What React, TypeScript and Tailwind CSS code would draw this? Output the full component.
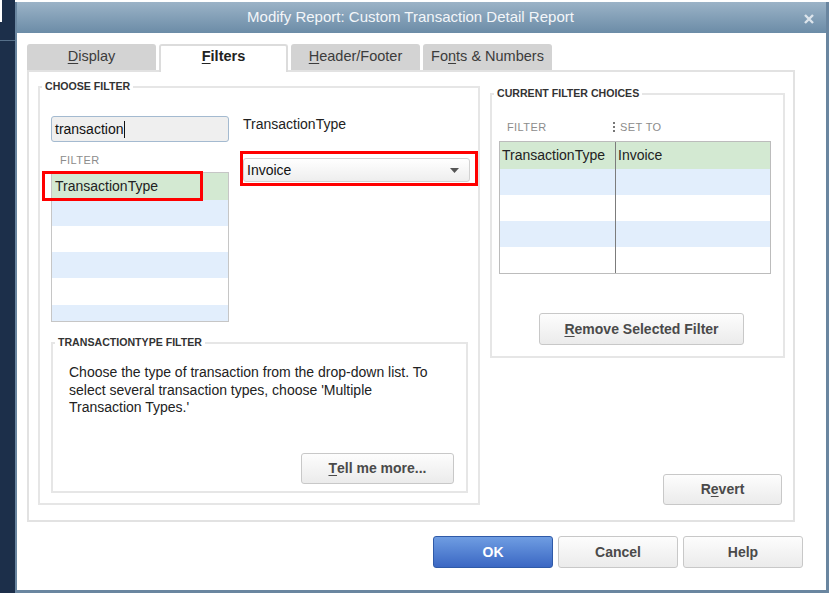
import type { ReactNode } from "react";

const FONT = { fontFamily: '"Liberation Sans", Arial, sans-serif' };

function Btn({ children, className = "" }: { children: ReactNode; className?: string }) {
  return (
    <div
      className={`flex items-center justify-center rounded-[3px] border border-[#c8c8c8] bg-gradient-to-b from-[#fdfdfd] to-[#ebebeb] text-[14px] font-bold text-[#4a4a4a] ${className}`}
    >
      {children}
    </div>
  );
}

function U({ children }: { children: ReactNode }) {
  return <span className="underline underline-offset-2">{children}</span>;
}

function Legend({ children }: { children: ReactNode }) {
  return (
    <legend className="ml-[2px] px-[3px] text-[10.6px] font-bold leading-[13px] text-[#333]">
      {children}
    </legend>
  );
}

export default function App() {
  return (
    <div className="flex h-[593px] w-[829px] overflow-hidden bg-white text-[#222]" style={FONT}>
      {/* left edge of the app behind the dialog */}
      <div className="flex w-[15px] flex-col">
        <div className="flex h-[22px]">
          <div className="w-[2px] bg-white" />
          <div className="flex-1 bg-[#1c2f4a]" />
        </div>
        <div className="h-[18px] bg-[#1c2f4a]" />
        <div className="h-px bg-[#56708a]" />
        <div className="flex-1 bg-[#1c2f4a]" />
      </div>

      {/* dialog */}
      <div className="mt-[2px] flex flex-1 flex-col border-b-[3px] border-l-2 border-r-[3px] border-[#6a86a0]">
        <div className="relative flex h-[31px] items-center justify-center bg-gradient-to-b from-[#9bb3c7] to-[#6c8ca7] pr-[22px] text-[15px] text-[#f3f6f9]">
          Modify Report: Custom Transaction Detail Report
          <svg className="absolute right-[12px] top-[12px]" width="10" height="10" viewBox="0 0 10 10">
            <path d="M1 1 L9 9 M9 1 L1 9" stroke="#dde5ec" strokeWidth="2.4" />
          </svg>
        </div>

        <div className="flex flex-1 flex-col bg-white">
          {/* tabs */}
          <div className="mt-[11px] flex h-[26px] items-start gap-[3px] pl-[10px]">
            <div className="flex h-[26px] w-[129px] items-center justify-center rounded-t-[3px] bg-[#d3d3d3] text-[14.5px] text-[#3c3c3c]">
              <U>D</U>isplay
            </div>
            <div className="relative z-10 flex h-[28px] w-[129px] items-center justify-center rounded-t-[3px] border-2 border-b-0 border-[#dcdcdc] bg-white pb-[4px] text-[14.5px] font-bold text-[#222]">
              <U>F</U>ilters
            </div>
            <div className="flex h-[26px] w-[129px] items-center justify-center rounded-t-[3px] bg-[#d3d3d3] text-[14.5px] text-[#3c3c3c]">
              <U>H</U>eader/Footer
            </div>
            <div className="flex h-[26px] w-[129px] items-center justify-center rounded-t-[3px] bg-[#d3d3d3] text-[14.5px] text-[#3c3c3c]">
              Fo<U>n</U>ts &amp; Numbers
            </div>
          </div>

          {/* tab panel */}
          <div className="ml-[10px] flex h-[452px] w-[768px] gap-[10px] border-2 border-[#e2e2e2] pl-[9px] pt-[8px]">
            {/* choose filter */}
            <fieldset className="relative h-[425px] w-[442px] border-2 border-[#e6e6e6]">
              <Legend>CHOOSE FILTER</Legend>
              <div className="flex gap-[14px] pl-[11px] pt-[23px]">
                <div className="flex w-[178px] flex-col">
                  <div className="flex h-[26px] items-center rounded-[3px] border border-[#a4bad0] bg-[#efefef] pl-[3px] text-[14px] text-[#111]">
                    transaction
                    <span className="ml-px h-[17px] w-px bg-[#111]" />
                  </div>
                  <div className="flex h-[30px] items-end pb-[4px] pl-[9px] text-[11px] tracking-[0.4px] text-[#8c8c8c]">
                    FILTER
                  </div>
                  <div className="flex h-[150px] flex-col overflow-hidden border border-[#c6c6c6]">
                    <div className="flex h-[27px] shrink-0 items-center bg-[#d3e9d2] pl-[3px] text-[14px] text-[#222]">
                      TransactionType
                    </div>
                    <div className="h-[26px] shrink-0 bg-[#e2eefc]" />
                    <div className="h-[26px] shrink-0 bg-white" />
                    <div className="h-[26px] shrink-0 bg-[#e2eefc]" />
                    <div className="h-[27px] shrink-0 bg-white" />
                    <div className="h-[26px] shrink-0 bg-[#e2eefc]" />
                  </div>
                </div>
                <div className="flex flex-col">
                  <div className="h-[16px] text-[14px] leading-[16px] text-[#222]">TransactionType</div>
                  <div className="mt-[26px] flex h-[24px] w-[227px] items-center justify-between rounded-[3px] border border-[#d2d2d2] bg-gradient-to-b from-white to-[#eeeeee] pl-[3px] pr-[10px] text-[14px] text-[#111]">
                    Invoice
                    <svg width="9" height="5" viewBox="0 0 9 5">
                      <path d="M0 0 H9 L4.5 5 Z" fill="#555" />
                    </svg>
                  </div>
                </div>
              </div>

              <fieldset className="ml-[11px] mt-[14px] h-[157px] w-[417px] border-2 border-[#e6e6e6]">
                <Legend>TRANSACTIONTYPE FILTER</Legend>
                <div className="flex h-[142px] flex-col">
                  <p className="w-[384px] pl-[16px] pt-[15px] text-[14px] leading-[17.5px] text-[#222]">
                    Choose the type of transaction from the drop-down list. To select several transaction
                    types, choose &apos;Multiple Transaction Types.&apos;
                  </p>
                  <Btn className="mb-[7px] mr-[12px] mt-auto h-[31px] w-[153px] self-end">
                    <U>T</U>ell me more...
                  </Btn>
                </div>
              </fieldset>

              {/* red highlight boxes */}
              <div className="pointer-events-none absolute left-[2px] top-[78px] h-[30px] w-[161px] border-[3px] border-[#ff0000]" />
              <div className="pointer-events-none absolute left-[200px] top-[58px] h-[35px] w-[238px] border-[3px] border-[#ff0000]" />
            </fieldset>

            {/* current filter choices */}
            <div className="flex w-[303px] flex-col">
              <fieldset className="mt-[7px] h-[271px] w-[295px] border-2 border-[#e6e6e6]">
                <Legend>CURRENT FILTER CHOICES</Legend>
                <div className="flex h-[41px] items-end pb-[6px] pl-[7px] text-[11px] tracking-[0.4px] text-[#8c8c8c]">
                  <span className="w-[116px] pl-[8px]">FILTER</span>
                  <span className="flex items-center gap-[5px]">
                    <span className="-ml-[2px] flex flex-col gap-[2px]">
                      <span className="h-[2px] w-[2px] bg-[#777]" />
                      <span className="h-[2px] w-[2px] bg-[#777]" />
                      <span className="h-[2px] w-[2px] bg-[#777]" />
                    </span>
                    SET TO
                  </span>
                </div>
                <div className="ml-[7px] flex h-[133px] w-[272px] border border-[#bcbcbc]">
                  <div className="flex w-[116px] flex-col border-r border-[#7c7c7c]">
                    <div className="flex h-[27px] items-center bg-[#d3e9d2] pl-[2px] text-[14px] text-[#222]">
                      TransactionType
                    </div>
                    <div className="h-[26px] bg-[#e2eefc]" />
                    <div className="h-[26px] bg-white" />
                    <div className="h-[26px] bg-[#e2eefc]" />
                    <div className="h-[26px] bg-white" />
                  </div>
                  <div className="flex flex-1 flex-col">
                    <div className="flex h-[27px] items-center bg-[#d3e9d2] pl-[2px] text-[14px] text-[#222]">
                      Invoice
                    </div>
                    <div className="h-[26px] bg-[#e2eefc]" />
                    <div className="h-[26px] bg-white" />
                    <div className="h-[26px] bg-[#e2eefc]" />
                    <div className="h-[26px] bg-white" />
                  </div>
                </div>
                <Btn className="ml-[47px] mt-[39px] h-[32px] w-[205px]">
                  <span>
                    <U>R</U>emove Selected Filter
                  </span>
                </Btn>
              </fieldset>
              <Btn className="mb-[15px] mr-[11px] mt-auto h-[31px] w-[119px] self-end">
                <span>
                  R<U>e</U>vert
                </span>
              </Btn>
            </div>
          </div>

          {/* dialog buttons */}
          <div className="mt-[14px] flex justify-end gap-[5px] pr-[23px]">
            <div className="flex h-[32px] w-[120px] items-center justify-center rounded-[3px] border border-[#2f5aa8] bg-gradient-to-b from-[#6f9de2] to-[#3b67c3] text-[14px] font-bold text-white">
              OK
            </div>
            <Btn className="h-[32px] w-[120px]">Cancel</Btn>
            <Btn className="h-[32px] w-[120px]">Help</Btn>
          </div>
        </div>
      </div>
    </div>
  );
}
